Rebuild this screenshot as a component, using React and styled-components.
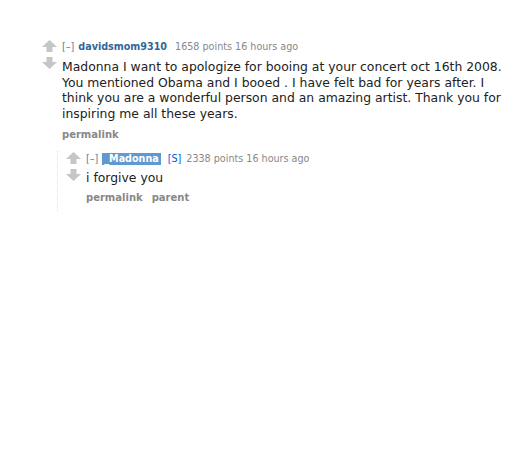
import styled, { createGlobalStyle } from "styled-components";

const GlobalStyle = createGlobalStyle`
  html, body {
    margin: 0;
    padding: 0;
    background: #ffffff;
  }
  body {
    font-family: "DejaVu Sans", Verdana, sans-serif;
  }
`;

function Arrow({ down }) {
  return (
    <ArrowIcon viewBox="0 0 15 12" $down={down}>
      <polygon points="0,7 7.5,0 15,7" fill="#c6c6c6" />
      <rect x="4.5" y="6.5" width="6" height="5.5" fill="#c6c6c6" />
    </ArrowIcon>
  );
}

function Comment({ author, op, score, time, text, buttons, children }) {
  return (
    <CommentBox>
      <Row>
        <Midcol>
          <Arrow />
          <Arrow down />
        </Midcol>
        <Entry>
          <Tagline>
            <Expand>[–]</Expand>
            <Author $op={op}>{author}</Author>
            {op && <Submitter>[S]</Submitter>}
            <span>
              {score} points {time}
            </span>
          </Tagline>
          <Body>
            {text.map((p, i) => (
              <p key={i}>{p}</p>
            ))}
          </Body>
          <Buttons>
            {buttons.map((b) => (
              <li key={b}>{b}</li>
            ))}
          </Buttons>
        </Entry>
      </Row>
      {children && <Child>{children}</Child>}
    </CommentBox>
  );
}

export default function App() {
  return (
    <Page>
      <GlobalStyle />
      <Comment
        author="davidsmom9310"
        score="1658"
        time="16 hours ago"
        text={[
          "Madonna I want to apologize for booing at your concert oct 16th 2008. You mentioned Obama and I booed . I have felt bad for years after. I think you are a wonderful person and an amazing artist. Thank you for inspiring me all these years.",
        ]}
        buttons={["permalink"]}
      >
        <Comment
          author="_Madonna"
          op
          score="2338"
          time="16 hours ago"
          text={["i forgive you"]}
          buttons={["permalink", "parent"]}
        />
      </Comment>
    </Page>
  );
}

const Page = styled.div`
  width: 529px;
  height: 452px;
  box-sizing: border-box;
  padding: 40px 20px 0 42px;
  background: #ffffff;
`;

const CommentBox = styled.div`
  display: flex;
  flex-direction: column;
`;

const Row = styled.div`
  display: flex;
  align-items: flex-start;
`;

const Midcol = styled.div`
  width: 20px;
  display: flex;
  flex-direction: column;
  gap: 5px;
  flex-shrink: 0;
`;

const ArrowIcon = styled.svg`
  width: 15px;
  height: 12px;
  display: block;
  transform: ${(p) => (p.$down ? "rotate(180deg)" : "none")};
`;

const Entry = styled.div`
  flex: 1;
  min-width: 0;
`;

const Tagline = styled.div`
  font-size: 9.6px;
  line-height: 12px;
  color: #888888;
  display: flex;
  align-items: baseline;
  gap: 5px;
  margin-top: 1px;
`;

const Expand = styled.span`
  color: #5a7ea8;
  margin-right: -1px;
`;

const Author = styled.span`
  font-weight: bold;
  color: ${(p) => (p.$op ? "#ffffff" : "#336699")};
  background: ${(p) => (p.$op ? "#5f99cf" : "transparent")};
  padding: ${(p) => (p.$op ? "0 2px" : "0")};
  margin-right: ${(p) => (p.$op ? "2px" : "3px")};
`;

const Submitter = styled.span`
  color: #0055df;
  margin-right: 0;
`;

const Body = styled.div`
  margin-top: 6px;
  font-size: 12.4px;
  line-height: 15.7px;
  color: #222222;
  p {
    margin: 0;
  }
`;

const Buttons = styled.ul`
  list-style: none;
  margin: 7px 0 0;
  padding: 0;
  display: flex;
  gap: 9px;
  font-size: 10px;
  line-height: 12px;
  font-weight: bold;
  color: #888888;
`;

const Child = styled.div`
  margin: 10px 0 0 15px;
  padding: 1px 0 8px 8px;
  border-left: 1px dotted #dde0f8;
  ${Body} {
    margin-top: 5px;
  }
  ${Buttons} {
    margin-top: 6px;
  }
`;
